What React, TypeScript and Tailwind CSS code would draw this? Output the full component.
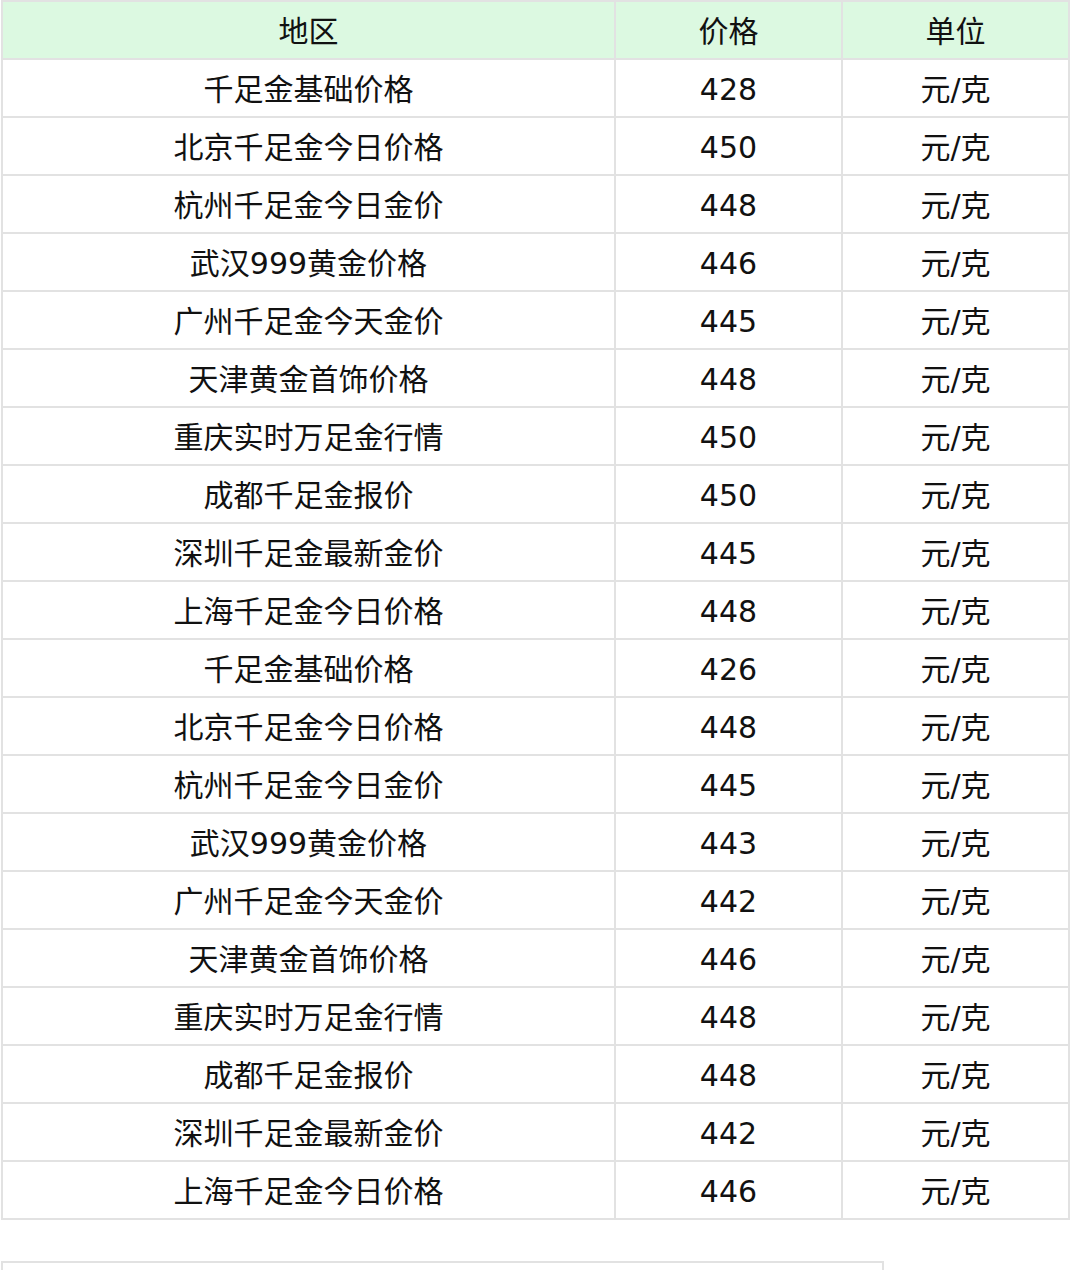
import React from 'react';

const rows: [string, number][] = [
  ['千足金基础价格', 428],
  ['北京千足金今日价格', 450],
  ['杭州千足金今日金价', 448],
  ['武汉999黄金价格', 446],
  ['广州千足金今天金价', 445],
  ['天津黄金首饰价格', 448],
  ['重庆实时万足金行情', 450],
  ['成都千足金报价', 450],
  ['深圳千足金最新金价', 445],
  ['上海千足金今日价格', 448],
  ['千足金基础价格', 426],
  ['北京千足金今日价格', 448],
  ['杭州千足金今日金价', 445],
  ['武汉999黄金价格', 443],
  ['广州千足金今天金价', 442],
  ['天津黄金首饰价格', 446],
  ['重庆实时万足金行情', 448],
  ['成都千足金报价', 448],
  ['深圳千足金最新金价', 442],
  ['上海千足金今日价格', 446],
];

const cell = 'border-2 border-[#e2e2e2] h-[58px] p-0 pt-[4px] text-center align-middle font-normal';

export default function App() {
  return (
    <div
      className="w-[1071px] h-[1270px] overflow-hidden bg-white text-[#111] text-[30px] leading-none"
      style={{ fontFamily: '"DejaVu Sans", "Noto Sans CJK SC", sans-serif' }}
    >
      <div className="pl-px pt-0">
        <table className="border-collapse w-[1067px] table-fixed">
          <colgroup>
            <col className="w-[613px]" />
            <col className="w-[227px]" />
            <col className="w-[227px]" />
          </colgroup>
          <thead>
            <tr className="bg-[#dcf9e1]">
              <th className={cell}>地区</th>
              <th className={cell}>价格</th>
              <th className={cell}>单位</th>
            </tr>
          </thead>
          <tbody>
            {rows.map(([name, price], i) => (
              <tr key={i}>
                <td className={cell}>{name}</td>
                <td className={cell}>{price}</td>
                <td className={cell}>元/克</td>
              </tr>
            ))}
          </tbody>
        </table>
        <div className="mt-[41px] w-[883px] h-[40px] border-2 border-[#e2e2e2]" />
      </div>
    </div>
  );
}
